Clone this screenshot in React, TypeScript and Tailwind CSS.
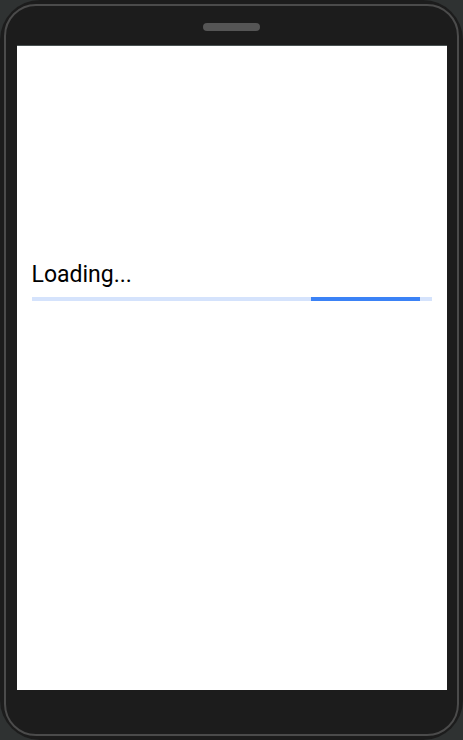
import React from "react";

export default function App() {
  return (
    <div className="w-[463px] h-[740px] bg-[#2f3232] overflow-hidden">
      <div className="w-full h-full rounded-[40px] bg-[#1c1c1c] p-[4px]">
        <div className="h-full rounded-[32px] border-2 border-[#4b4b4b] flex flex-col items-center">
          <div className="mt-[17px] w-[57px] h-[8px] rounded-full bg-[#555555]" />
          <div
            className="mt-[14px] w-[430px] h-[645px] bg-white border-t border-[#4a5252] px-[15px] pt-[215px]"
            style={{ fontFamily: "Roboto, 'Liberation Sans', sans-serif" }}
          >
            <div className="text-[23px] leading-[28px] text-black">Loading...</div>
            <div className="mt-[8px] h-[4px] w-full bg-[#d5e3fc] relative">
              <div className="absolute top-0 h-full bg-[#3b82f6] left-[279px] w-[109px]" />
            </div>
          </div>
        </div>
      </div>
    </div>
  );
}
